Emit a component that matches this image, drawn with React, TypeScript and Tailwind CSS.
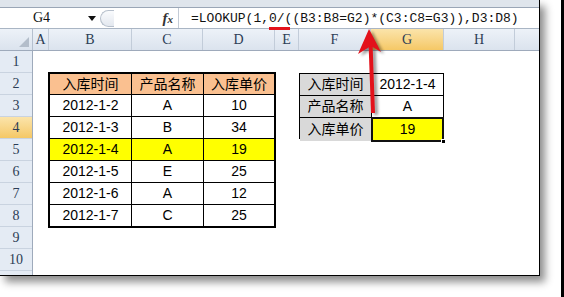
import React from 'react';

const cols = [
  { label: 'A', w: 'w-[16px]' },
  { label: 'B', w: 'w-[83px]' },
  { label: 'C', w: 'w-[71px]' },
  { label: 'D', w: 'w-[72px]' },
  { label: 'E', w: 'w-[24px]' },
  { label: 'F', w: 'w-[72px]' },
  { label: 'G', w: 'w-[73px]', active: true },
  { label: 'H', w: 'w-[71px]' },
];

// row 11 is only a sliver under the visible area, so it has no label
const rowNums = ['1', '2', '3', '4', '5', '6', '7', '8', '9', '10', ''];

const stock = [
  { date: '2012-1-2', name: 'A', price: '10' },
  { date: '2012-1-3', name: 'B', price: '34' },
  { date: '2012-1-4', name: 'A', price: '19', hit: true },
  { date: '2012-1-5', name: 'E', price: '25' },
  { date: '2012-1-6', name: 'A', price: '12' },
  { date: '2012-1-7', name: 'C', price: '25' },
];

const headFont = "font-['Liberation_Serif','DejaVu_Serif',serif]";
const cellFont = "font-['Liberation_Sans','Noto_Sans_CJK_SC',sans-serif]";

const FormulaBar = () => (
  <div className="flex h-[21px] items-stretch border-b border-[#a9b5c4] bg-white">
    <div className="flex w-[100px] items-center">
      <span className={`w-[86px] pl-[33px] text-[14px] leading-none text-[#111] ${headFont}`}>G4</span>
      <svg width="8" height="5" viewBox="0 0 8 5" className="ml-[2px]">
        <path d="M0 0h8L4 5z" fill="#111" />
      </svg>
    </div>
    <div className="flex items-center">
      <div className="h-[17px] w-[14px] rounded-l-full border border-r-0 border-[#b7c0cc] bg-gradient-to-b from-[#fafbfd] to-[#e3e8ef]" />
    </div>
    <div className="flex flex-1 items-center justify-end pr-[5px]">
      <span className="font-['Liberation_Serif',serif] text-[15px] font-bold italic leading-none text-[#333]">
        f<span className="text-[11px]">x</span>
      </span>
    </div>
    <div className="flex w-[361px] items-center border-l border-[#c3cbd6] pl-[12px] font-['Liberation_Mono','DejaVu_Sans_Mono',monospace] text-[13px] leading-none text-[#111]">
      =LOOKUP(1,0/((B3:B8=G2)*(C3:C8=G3)),D3:D8)
    </div>
  </div>
);

const ColumnHeader = () => (
  <div className={`flex h-[22px] border-b border-[#9eaabb] text-[14px] text-[#2c3d55] ${headFont}`}>
    <div className="relative w-[33px] border-r border-[#b5c0cf] bg-gradient-to-b from-[#edf2f8] to-[#dbe3ee]">
      <svg width="10" height="10" viewBox="0 0 10 10" className="absolute bottom-[3px] right-[3px]">
        <path d="M10 0v10H0z" fill="#b3bdca" />
      </svg>
    </div>
    {cols.map((c) => (
      <div
        key={c.label}
        className={`flex ${c.w} items-center justify-center border-r border-[#c2ccd9] ${
          c.active ? 'bg-gradient-to-b from-[#fbe4aa] to-[#f5c865]' : 'bg-gradient-to-b from-[#edf2f8] to-[#dbe3ee]'
        }`}
      >
        {c.label}
      </div>
    ))}
    <div className="flex-1 bg-gradient-to-b from-[#edf2f8] to-[#dbe3ee]" />
  </div>
);

const RowHeader = () => (
  <div className={`flex w-[33px] flex-col border-r border-[#9eaabb] text-[14px] text-[#2c3d55] ${headFont}`}>
    {rowNums.map((n, i) => (
      <div
        key={i}
        className={`flex h-[22px] shrink-0 items-center justify-center border-b border-[#c9d3e0] ${
          n === '4' ? 'bg-gradient-to-b from-[#fbe4aa] to-[#f5c865]' : 'bg-[#e4ebf4]'
        }`}
      >
        {n}
      </div>
    ))}
  </div>
);

const StockTable = () => (
  <div className={`-m-px col-start-2 col-end-5 row-start-2 row-end-9 grid grid-cols-[82px_72px_1fr] grid-rows-[21px_repeat(5,22px)_1fr] border-2 border-black text-[14px] text-black ${cellFont}`}>
    {['入库时间', '产品名称', '入库单价'].map((h, i) => (
      <div key={h} className={`flex items-center justify-center border-b border-black bg-[#fac090] ${i < 2 ? 'border-r' : ''}`}>
        {h}
      </div>
    ))}
    {stock.map((r, ri) => {
      const last = ri === stock.length - 1;
      const bg = r.hit ? 'bg-[#ffff00]' : 'bg-white';
      const bb = last ? '' : 'border-b';
      return (
        <React.Fragment key={r.date}>
          <div className={`flex items-center justify-center border-r border-black ${bb} ${bg}`}>{r.date}</div>
          <div className={`flex items-center justify-center border-r border-black ${bb} ${bg}`}>{r.name}</div>
          <div className={`flex items-center justify-center border-black ${bb} ${bg}`}>{r.price}</div>
        </React.Fragment>
      );
    })}
  </div>
);

const LookupTable = () => (
  <div className={`col-start-6 col-end-8 row-start-2 row-end-5 grid grid-cols-[72px_1fr] grid-rows-[22px_22px_1fr] border border-black text-[14px] text-black ${cellFont}`}>
    <div className="flex items-center justify-center border-b border-r border-black bg-[#d9d9d9]">入库时间</div>
    <div className="flex items-center justify-center border-b border-black bg-white">2012-1-4</div>
    <div className="flex items-center justify-center border-b border-r border-black bg-[#d9d9d9]">产品名称</div>
    <div className="flex items-center justify-center border-b border-black bg-white">A</div>
    <div className="flex items-center justify-center border-r border-black bg-[#d9d9d9]">入库单价</div>
    <div className="relative flex bg-white p-px">
      <div className="flex flex-1 items-center justify-center bg-[#ffff00]">19</div>
      <div className="absolute -inset-px border-2 border-[#111]" />
      <div className="absolute -bottom-[3px] -right-[3px] h-[5px] w-[5px] border border-white bg-black" />
    </div>
  </div>
);

export default function App() {
  return (
    <div className="relative flex h-[297px] w-[564px] overflow-hidden bg-white">
      <div className="flex h-[276px] w-[540px] flex-col overflow-hidden border-b border-r border-black bg-white shadow-[5px_6px_8px_rgba(0,0,0,0.45)]">
        <div className="h-[8px] border-b border-[#9aa6b6] bg-[#dfe5ec]" />
        <FormulaBar />
        <ColumnHeader />
        <div className="flex min-h-0 flex-1">
          <RowHeader />
          <div className="grid flex-1 grid-cols-[16px_83px_71px_72px_24px_72px_73px_71px_1fr] grid-rows-[repeat(11,22px)]">
            <StockTable />
            <LookupTable />
          </div>
        </div>
      </div>
      <div className="flex-1" />
      <div className="h-full w-[3px] bg-black" />

      <svg className="pointer-events-none absolute left-0 top-0" width="564" height="297" viewBox="0 0 564 297">
        <defs>
          <filter id="arrowShadow" x="-50%" y="-50%" width="200%" height="200%">
            <feGaussianBlur stdDeviation="1.5" />
          </filter>
        </defs>
        <rect x="269" y="27" width="21" height="3" fill="#e3121b" />
        <g transform="translate(3 2)" filter="url(#arrowShadow)" opacity="0.4">
          <line x1="373" y1="113" x2="370.5" y2="42" stroke="#000" strokeWidth="4" />
          <path d="M369 29 L381 52 L371 46 L358 54 Z" fill="#000" />
        </g>
        <line x1="373" y1="113" x2="370.5" y2="42" stroke="#e3121b" strokeWidth="4" />
        <path d="M369 29 L381 52 L371 46 L358 54 Z" fill="#e3121b" />
      </svg>
    </div>
  );
}
